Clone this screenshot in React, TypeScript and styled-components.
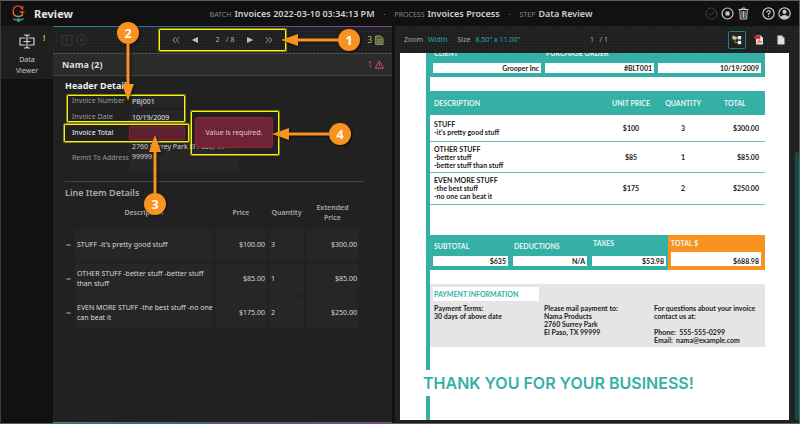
import React from "react";
import styled, { createGlobalStyle, css } from "styled-components";

const TEAL = "#35b0a7";
const ORANGE = "#f8931f";

const GlobalStyle = createGlobalStyle`
  *, *::before, *::after { box-sizing: border-box; }
  body {
    margin: 0;
    background: #111;
    color: #d6d6d6;
    font-family: "Noto Sans", sans-serif;
    font-size: 7px;
    line-height: 10px;
  }
  button, input, textarea { font: inherit; color: inherit; }
  h1, h2, h3, p, dl, dd { margin: 0; }
`;

const Shell = styled.div`
  position: relative;
  display: flex;
  flex-direction: column;
  min-height: 100vh;
  border: 1px solid #5d5e5e;
  border-left-color: #3c3c3c;
  background: #111;
`;

const IconButton = styled.button`
  display: inline-flex;
  align-items: center;
  justify-content: center;
  padding: 0;
  border: 0;
  background: none;
  color: inherit;
  cursor: pointer;
  svg { display: block; }
`;

/* ---------- top bar ---------- */

const TopBar = styled.header`
  display: grid;
  grid-template-columns: 1fr auto 1fr;
  align-items: center;
  height: 25px;
  padding: 0 8px 0 10px;
`;

const Brand = styled.div`
  display: flex;
  align-items: center;
  gap: 8px;
`;

const AppTitle = styled.h1`
  font-size: 11px;
  line-height: 16px;
  font-weight: 700;
  color: #e4e4e4;
`;

const Crumbs = styled.div`
  display: flex;
  align-items: baseline;
  gap: 9px;
  color: #999;
`;

const Crumb = styled.span`
  display: flex;
  align-items: baseline;
  gap: 3px;
  font-size: 7px;
  color: #858585;
  strong {
    font-size: 9px;
    line-height: 14px;
    font-weight: 600;
    color: #d0d0d0;
  }
`;

const TopActions = styled.div`
  display: flex;
  justify-content: flex-end;
  align-items: center;
  gap: 3px;
  color: #c9c9c9;
`;

const Spacer = styled.span`
  width: 6px;
`;

/* ---------- layout ---------- */

const Workspace = styled.div`
  flex: 1;
  display: grid;
  grid-template-columns: 52px minmax(0, 339fr) 3px minmax(0, 404fr);
`;

const Rail = styled.nav`
  background: #111;
`;

const RailTab = styled.button`
  display: grid;
  grid-template-columns: 1fr auto 1fr;
  align-items: start;
  align-content: start;
  justify-items: center;
  row-gap: 5px;
  width: 100%;
  height: 53px;
  padding: 8px 0 0;
  border: 0;
  background: #1f1f1f;
  color: #c8c8c8;
  line-height: 11px;
  svg { grid-column: 2; display: block; }
`;

const RailAlert = styled.span`
  color: #d9c92e;
  font-size: 8px;
  line-height: 8px;
  font-weight: 600;
`;

const RailLabel = styled.span`
  grid-column: 1 / -1;
  width: 30px;
`;

const DataPanel = styled.section`
  display: flex;
  flex-direction: column;
  background:
    linear-gradient(90deg, #1f8f92, #3c5f9c 45%, #8a3fa8) top / 100% 1px no-repeat,
    linear-gradient(90deg, #1f8f92, #3c5f9c 45%, #8a3fa8) bottom / 100% 1px no-repeat,
    #212121;
  padding: 1px 0;
`;

const toolbarTexture = css`
  background:
    repeating-linear-gradient(0deg, #ffffff06 0 1px, transparent 1px 3px),
    repeating-linear-gradient(90deg, #ffffff06 0 1px, transparent 1px 3px),
    #1e1e1e;
`;

const PanelToolbar = styled.div`
  ${toolbarTexture}
  display: grid;
  grid-template-columns: 1fr auto 1fr;
  align-items: center;
  height: 27px;
  padding: 0 8px;
  border-bottom: 1px solid #474747;
`;

const ToolGroup = styled.div`
  display: flex;
  gap: 3px;
  color: #3a3a3a;
`;

const Pager = styled.div`
  display: flex;
  align-items: center;
  gap: 9px;
  color: #a5a5a5;
`;

const PageField = styled.label`
  display: flex;
  align-items: center;
  width: 27px;
  color: #b0b0b0;
  white-space: nowrap;
  input {
    width: 17px;
    padding: 0;
    border: 0;
    outline: 0;
    background: none;
    text-align: center;
  }
`;

const Count = styled.span<{ $color: string }>`
  display: flex;
  align-items: center;
  justify-content: flex-end;
  gap: 3px;
  font-size: 8px;
  color: ${(p) => p.$color};
  svg { display: block; }
`;

const RecordBar = styled.div`
  display: flex;
  align-items: center;
  justify-content: space-between;
  height: 22px;
  padding: 0 8px 0 9px;
  border-bottom: 1px solid #444;
  background: repeating-conic-gradient(#262626 0 25%, #303030 0 50%) 0 0 / 4px 4px;
`;

const RecordTitle = styled.h2`
  font-size: 9px;
  line-height: 14px;
  font-weight: 700;
  color: #dcdcdc;
`;

const FormArea = styled.div`
  padding: 3px 28px 0 12px;
`;

const SectionTitle = styled.h3<{ $muted?: boolean }>`
  font-size: 9px;
  line-height: 14px;
  font-weight: ${(p) => (p.$muted ? 600 : 700)};
  color: ${(p) => (p.$muted ? "#adadad" : "#efefef")};
`;

const FieldRow = styled.label<{ $active?: boolean }>`
  display: grid;
  grid-template-columns: 57px minmax(0, 1fr);
  align-items: center;
  min-height: 16px;
  padding-left: 7px;
  color: ${(p) => (p.$active ? "#f2f2f2" : "#999")};
`;

const FieldInput = styled.input<{ $invalid?: boolean }>`
  width: 56px;
  height: 14px;
  padding: 0 2px;
  border: 1px solid ${(p) => (p.$invalid ? "#8e1f3a" : "transparent")};
  border-radius: 2px;
  outline: 0;
  background: ${(p) => (p.$invalid ? "#5c2030" : "#262626")};
  color: #e0e0e0;
  font-size: 7px;
`;

const FieldText = styled.textarea`
  display: block;
  width: 110px;
  height: 31px;
  margin: 1px 0;
  padding: 0 3px;
  border: 0;
  border-radius: 2px;
  outline: 0;
  resize: none;
  overflow: hidden;
  background: #262626;
  color: #d0d0d0;
  line-height: 10px;
`;

const Divider = styled.hr`
  height: 1px;
  margin: 7px 0 4px;
  border: 0;
  background: #444;
`;

const TableArea = styled.div`
  padding: 0 31px 0 9px;
`;

const ItemTable = styled.table`
  width: 100%;
  table-layout: fixed;
  border-collapse: separate;
  border-spacing: 2px;
`;

const ItemHead = styled.th<{ $w?: number }>`
  width: ${(p) => (p.$w ? `${p.$w}px` : "auto")};
  height: 25px;
  padding: 0 0 4px;
  font-weight: 600;
  color: #a8a8a8;
  white-space: pre-line;
`;

const ItemCell = styled.td<{ $end?: boolean }>`
  height: 32px;
  padding: ${(p) => (p.$end ? "0 2px 0 0" : "0 0 0 2px")};
  border-radius: 2px;
  background: #262626;
  color: #d8d8d8;
  text-align: ${(p) => (p.$end ? "right" : "left")};
`;

const HandleCell = styled.td`
  padding: 0 2px;
`;

const Handle = styled.span`
  display: block;
  width: 5px;
  height: 2px;
  border-radius: 1px;
  background: #6a6a6a;
`;

/* ---------- document viewer ---------- */

const Viewer = styled.section`
  display: flex;
  flex-direction: column;
  background: #212121;
`;

const ViewerBar = styled.div`
  ${toolbarTexture}
  display: grid;
  grid-template-columns: 1fr auto 1fr;
  align-items: center;
  height: 27px;
  padding: 1px 9px 0;
  color: #a8a8a8;
`;

const ViewOptions = styled.div`
  display: flex;
  gap: 10px;
`;

const Option = styled.span`
  display: flex;
  gap: 5px;
`;

const OptionValue = styled(IconButton)`
  color: #23a5b2;
  white-space: nowrap;
`;

const PageCount = styled.span`
  padding-left: 4px;
  white-space: pre;
`;

const ViewModes = styled.div`
  display: flex;
  align-items: center;
  justify-content: flex-end;
  gap: 4px;
`;

const ModeButton = styled(IconButton)<{ $active?: boolean }>`
  width: 18px;
  height: 18px;
  border: 1px solid ${(p) => (p.$active ? "#1a8288" : "transparent")};
  border-radius: 2px;
`;

const DocArea = styled.div`
  flex: 1;
  display: flex;
  padding: 0 0 3px 5px;
`;

const Paper = styled.article`
  flex: 1;
  min-width: 0;
  display: flex;
  flex-direction: column;
  padding: 0 24px 0 26px;
  background: #fff;
  color: #222;
  font-family: Lato, sans-serif;
  font-size: 7px;
  font-weight: 700;
  line-height: 8px;
`;

const ScrollTrack = styled.div`
  display: flex;
  flex-direction: column;
  width: 10px;
  padding: 99px 0 0 6px;
`;

const ScrollThumb = styled.div`
  flex: 1;
  border-radius: 2px;
  background: #154a4d;
`;

const Ruled = styled.div`
  border-left: 4px solid ${TEAL};
  padding-bottom: 23px;
`;

const Masthead = styled.div`
  display: grid;
  grid-template-columns: 108fr 109fr 103fr;
  gap: 4px;
  height: 24px;
  padding: 0 4px 4px 3px;
  background: ${TEAL};
`;

const MastField = styled.div`
  display: flex;
  flex-direction: column;
  justify-content: space-between;
`;

const ClippedLabel = styled.span`
  display: flex;
  align-items: flex-end;
  height: 4px;
  overflow: hidden;
  padding-left: 1px;
  color: #e6f6f4;
  white-space: nowrap;
`;

const ValueBox = styled.span<{ $tall?: boolean }>`
  display: flex;
  align-items: center;
  justify-content: flex-end;
  height: ${(p) => (p.$tall ? "14px" : "10px")};
  padding: ${(p) => (p.$tall ? "4px 2px 0" : "0 2px")};
  background: #fff;
  color: #222;
`;

const InvoiceTable = styled.table`
  width: 100%;
  margin-top: 14px;
  table-layout: fixed;
  border-collapse: collapse;
`;

const InvoiceHead = styled.th<{ $w: string; $start?: boolean }>`
  width: ${(p) => p.$w};
  height: 24px;
  padding: 0 4px;
  background: ${TEAL};
  color: #e6f6f4;
  font-weight: 700;
  text-align: ${(p) => (p.$start ? "left" : "center")};
`;

const InvoiceRow = styled.tr<{ $h: number }>`
  height: ${(p) => p.$h}px;
  border-bottom: 1px solid #62c3bb;
  &:last-child { border-bottom: 0; }
`;

const InvoiceCell = styled.td<{ $align?: string }>`
  padding: 0 ${(p) => (p.$align === "right" ? "6px" : "4px")};
  text-align: ${(p) => p.$align ?? "center"};
  white-space: pre-line;
`;

const Totals = styled.div`
  display: grid;
  grid-template-columns: 80fr 79fr 79fr 97fr;
  height: 35px;
  background: ${TEAL};
  color: #e6f6f4;
`;

const TotalField = styled.div<{ $accent?: boolean; $raised?: boolean }>`
  display: flex;
  flex-direction: column;
  justify-content: space-between;
  padding: ${(p) => (p.$raised ? "4px" : "7px")} ${(p) => (p.$accent ? "4px" : "2px")} 4px 3px;
  background: ${(p) => (p.$accent ? ORANGE : "none")};
`;

const TotalLabel = styled.span`
  padding-left: 1px;
`;

const Payment = styled.div`
  display: grid;
  grid-template-columns: 110fr 110fr 115fr;
  grid-template-rows: 14px auto;
  row-gap: 3px;
  height: 63px;
  margin-top: 14px;
  padding: 3px 0 0;
  background: #e5e5e5;
`;

const PaymentTitle = styled.h3`
  grid-column: 1 / 2;
  margin: 0 1px 0 3px;
  padding: 0 1px;
  background: #fff;
  color: ${TEAL};
  font-size: 7px;
  line-height: 14px;
  font-weight: 700;
`;

const PaymentText = styled.p`
  grid-row: 2;
  padding-left: 4px;
  white-space: pre;
`;

const Thanks = styled.p`
  margin-left: -3px;
  color: ${TEAL};
  font-family: Inter, sans-serif;
  font-size: 16px;
  line-height: 26px;
  font-weight: 600;
  white-space: nowrap;
`;

const RuleEnd = styled.div`
  flex: 1;
  width: 4px;
  background: ${TEAL};
`;

/* ---------- callouts laid over the page ---------- */

type Box = { x: number; y: number; w: number; h: number };

const Highlight = styled.div<{ $box: Box }>`
  position: absolute;
  left: ${(p) => p.$box.x}px;
  top: ${(p) => p.$box.y}px;
  width: ${(p) => p.$box.w}px;
  height: ${(p) => p.$box.h}px;
  border: 1px solid #f8f20c;
  border-radius: 1px;
  box-shadow: 0 0 0 1px #f6f00c77;
  pointer-events: none;
`;

const ErrorTip = styled.div`
  position: absolute;
  left: 194px;
  top: 116px;
  width: 78px;
  height: 31px;
  border: 1px solid #9a1e3c;
  border-radius: 3px;
  background: #6f2436;
  color: #dccbd0;
  text-align: center;
  line-height: 29px;
`;

type Direction = "row" | "row-reverse" | "column" | "column-reverse";

const CalloutBox = styled.div<{ $x: number; $y: number; $dir: Direction }>`
  position: absolute;
  left: ${(p) => p.$x}px;
  top: ${(p) => p.$y}px;
  display: flex;
  flex-direction: ${(p) => p.$dir};
  align-items: center;
  pointer-events: none;
  filter: drop-shadow(1px 1px 1px #0009);
  svg { display: block; }
`;

const Badge = styled.span`
  width: 22px;
  height: 22px;
  border-radius: 50%;
  background: ${ORANGE};
  color: #fff;
  font-family: "Open Sans", sans-serif;
  font-size: 13px;
  font-weight: 700;
  line-height: 22px;
  text-align: center;
`;

function Callout({ n, x, y, dir, length }: { n: number; x: number; y: number; dir: Direction; length: number }) {
  const vertical = dir.startsWith("column");
  const angle = { row: 0, "row-reverse": 180, column: 90, "column-reverse": 270 }[dir];
  const w = vertical ? 12 : length;
  const h = vertical ? length : 12;
  return (
    <CalloutBox $x={x} $y={y} $dir={dir}>
      <Badge>{n}</Badge>
      <svg width={w} height={h} viewBox={`${-w / 2} ${-h / 2} ${w} ${h}`} fill={ORANGE} aria-hidden="true">
        <g transform={`rotate(${angle})`}>
          <rect x={-length / 2 - 1} y={-1.5} width={length - 14} height={3} />
          <path d={`M${length / 2} 0L${length / 2 - 17} -6V6Z`} />
        </g>
      </svg>
    </CalloutBox>
  );
}

/* ---------- icons ---------- */

const stroke = { fill: "none", stroke: "currentColor", strokeLinecap: "round", strokeLinejoin: "round" } as const;

const Logo = () => (
  <svg width="15" height="18" viewBox="0 0 15 18" aria-label="Grooper">
    <defs>
      <linearGradient id="logoFill" x1="0" y1="0" x2="0" y2="1">
        <stop offset="0" stopColor="#c8402a" />
        <stop offset="1" stopColor="#e5822b" />
      </linearGradient>
    </defs>
    <path
      d="M11.2 4.6C10.6 2.2 9.2 1 7.2 1C4.2 1 2.2 3.1 2.2 6.3C2.2 9.5 4.2 11.5 7.2 11.5C8.9 11.5 10.2 11.1 11.3 10.2V7M8.6 6.9H13.4M11.6 1V4.8"
      fill="none"
      stroke="url(#logoFill)"
      strokeWidth="1.4"
    />
    <path d="M1.5 13.4H4L5 14.4L6.2 13.4H8.8L10 14.4L11 13.4H13.5L11.4 15.4L9.8 15.2L7.5 17.6L5.2 15.2L3.6 15.4Z" fill="#27a5a0" />
  </svg>
);

const CheckCircle = () => (
  <svg width="13" height="13" viewBox="0 0 13 13" {...stroke} color="#444">
    <circle cx="6.5" cy="6.5" r="5.5" />
    <path d="M4 6.7L5.8 8.4L9 4.8" />
  </svg>
);
const StopCircle = () => (
  <svg width="13" height="13" viewBox="0 0 13 13" {...stroke} strokeWidth="1.2">
    <circle cx="6.5" cy="6.5" r="5.5" />
    <rect x="4.5" y="4.5" width="4" height="4" fill="currentColor" stroke="none" />
  </svg>
);
const Trash = () => (
  <svg width="13" height="13" viewBox="0 0 13 13" {...stroke}>
    <path d="M1.8 2.5H11.2M4.6 2.3L5.2 1H7.8L8.4 2.3M2.8 3.2L3.3 12H9.7L10.2 3.2" />
    <path d="M5 4.5V10.4M6.5 4.5V10.4M8 4.5V10.4" strokeWidth="0.9" />
  </svg>
);
const Help = () => (
  <svg width="13" height="13" viewBox="0 0 13 13" {...stroke} strokeWidth="1.2">
    <circle cx="6.5" cy="6.5" r="5.6" />
    <path d="M4.9 5.1C4.9 3.2 8.2 3.2 8.2 5.1C8.2 6.3 6.5 6.3 6.5 7.5M6.5 9.2V9.5" />
  </svg>
);
const User = () => (
  <svg width="13" height="13" viewBox="0 0 13 13" {...stroke} strokeWidth="1.2">
    <circle cx="6.5" cy="6.5" r="5.6" />
    <circle cx="6.5" cy="4.9" r="2.1" fill="currentColor" stroke="none" />
    <path d="M2.8 10.2C3.6 7.4 9.4 7.4 10.2 10.2C8.4 12.2 4.6 12.2 2.8 10.2Z" fill="currentColor" stroke="none" />
  </svg>
);
const FieldCursor = () => (
  <svg width="16" height="15" viewBox="0 0 16 15" {...stroke} color="#d2d2d2" strokeWidth="1.2">
    <path d="M6 4H1V11H6M10 4H15V11H10M5.5 1H7L8 2L9 1H10.5M8 2V13M5.5 14H7L8 13L9 14H10.5M5 7.5H11" />
  </svg>
);
const SaveBox = () => (
  <svg width="12" height="12" viewBox="0 0 12 12" {...stroke}>
    <path d="M4 1.5H1V11H11V1.5H8M6 1V7M3.8 5L6 7.2L8.2 5" />
  </svg>
);
const CancelCircle = () => (
  <svg width="12" height="12" viewBox="0 0 12 12" {...stroke}>
    <circle cx="6" cy="6" r="5" />
    <path d="M4.2 4.2L7.8 7.8M7.8 4.2L4.2 7.8" />
  </svg>
);
const Chevrons = ({ flip }: { flip?: boolean }) => (
  <svg width="10" height="8" viewBox="0 0 10 8" {...stroke} strokeWidth="0.9">
    <path d={flip ? "M2 1.5L4.8 4L2 6.5M5.4 1.5L8.2 4L5.4 6.5" : "M8 1.5L5.2 4L8 6.5M4.6 1.5L1.8 4L4.6 6.5"} />
  </svg>
);
const Triangle = ({ flip }: { flip?: boolean }) => (
  <svg width="10" height="8" viewBox="0 0 10 8" fill="#bdbdbd">
    <path d={flip ? "M2 1L8.4 4L2 7Z" : "M8 1L1.6 4L8 7Z"} />
  </svg>
);
const Sheet = () => (
  <svg width="9" height="10" viewBox="0 0 9 10" {...stroke} color="#9a9a62" strokeWidth="1">
    <path d="M1 1H5.5L8 3.4V9.4H1Z" fill="#55603a" />
    <path d="M2.8 4.5H6.2M2.8 6H6.2M2.8 7.6H6.2" strokeWidth="0.7" />
  </svg>
);
const Warning = () => (
  <svg width="9" height="9" viewBox="0 0 9 9" {...stroke} color="#d84a66">
    <path d="M4.5 1L8.4 8.2H0.6Z" />
    <path d="M4.5 3.6V5.6M4.5 6.9V7" strokeWidth="0.9" />
  </svg>
);
const Tree = () => (
  <svg width="10" height="10" viewBox="0 0 10 10">
    <path d="M3 3V7.5H6M3 3H6" fill="none" stroke="#999" strokeWidth="0.8" />
    <path d="M0.4 0.8H2L2.6 1.5H4.6V4.4H0.4Z" fill="#e9c27a" />
    <rect x="5.8" y="1" width="3.4" height="3.4" fill="#eee" />
    <rect x="5.8" y="5.8" width="3.4" height="3.4" fill="#eee" />
  </svg>
);
const Pdf = () => (
  <svg width="10" height="10" viewBox="0 0 10 10">
    <path d="M2 0.5H6.8L9 2.8V9.5H2Z" fill="#e8e4e4" />
    <rect x="0.3" y="0.8" width="6" height="3" fill="#d3261f" />
    <path d="M3.2 8C5 6.8 5.3 5.4 5 4.6C4.8 6.4 6.4 7.2 8 6.9C6 6.6 4.4 7.2 3.2 8Z" fill="none" stroke="#d3261f" strokeWidth="0.6" />
  </svg>
);
const Blank = () => (
  <svg width="8" height="10" viewBox="0 0 8 10">
    <path d="M0.5 0.5H5L7.5 3V9.5H0.5Z" fill="#dedede" />
    <path d="M5 0.5V3H7.5" fill="#aaa" />
  </svg>
);

/* ---------- data ---------- */

const lineItems = [
  ["STUFF -it's pretty good stuff", "$100.00", "3", "$300.00"],
  ["OTHER STUFF -better stuff -better stuff than stuff", "$85.00", "1", "$85.00"],
  ["EVEN MORE STUFF -the best stuff -no one can beat it", "$175.00", "2", "$250.00"],
];

const invoiceLines = [
  { text: "STUFF\n-it's pretty good stuff", price: "$100", qty: "3", total: "$300.00", h: 26 },
  { text: "OTHER STUFF\n-better stuff\n-better stuff than stuff", price: "$85", qty: "1", total: "$85.00", h: 31 },
  { text: "EVEN MORE STUFF\n-the best stuff\n-no one can beat it", price: "$175", qty: "2", total: "$250.00", h: 32 },
  { text: "", price: "", qty: "", total: "", h: 31 },
];

export default function App() {
  return (
    <Shell>
      <GlobalStyle />
      <TopBar>
        <Brand>
          <Logo />
          <AppTitle>Review</AppTitle>
        </Brand>
        <Crumbs>
          <Crumb>BATCH <strong>Invoices 2022-03-10 03:34:13 PM</strong></Crumb>
          <span>·</span>
          <Crumb>PROCESS <strong>Invoices Process</strong></Crumb>
          <span>·</span>
          <Crumb>STEP <strong>Data Review</strong></Crumb>
        </Crumbs>
        <TopActions>
          <IconButton aria-label="Complete"><CheckCircle /></IconButton>
          <IconButton aria-label="Stop"><StopCircle /></IconButton>
          <IconButton aria-label="Delete"><Trash /></IconButton>
          <Spacer />
          <IconButton aria-label="Help"><Help /></IconButton>
          <IconButton aria-label="Account"><User /></IconButton>
        </TopActions>
      </TopBar>

      <Workspace>
        <Rail>
          <RailTab>
            <FieldCursor />
            <RailAlert>!</RailAlert>
            <RailLabel>Data Viewer</RailLabel>
          </RailTab>
        </Rail>

        <DataPanel>
          <PanelToolbar>
            <ToolGroup>
              <IconButton aria-label="Save"><SaveBox /></IconButton>
              <IconButton aria-label="Cancel"><CancelCircle /></IconButton>
            </ToolGroup>
            <Pager>
              <IconButton aria-label="First"><Chevrons /></IconButton>
              <IconButton aria-label="Previous"><Triangle /></IconButton>
              <PageField><input aria-label="Document" defaultValue="2" /> / 8</PageField>
              <IconButton aria-label="Next"><Triangle flip /></IconButton>
              <IconButton aria-label="Last"><Chevrons flip /></IconButton>
            </Pager>
            <Count $color="#b9bb78">3 <Sheet /></Count>
          </PanelToolbar>
          <RecordBar>
            <RecordTitle>Nama (2)</RecordTitle>
            <Count $color="#c9506a">1 <Warning /></Count>
          </RecordBar>

          <FormArea>
            <SectionTitle>Header Details</SectionTitle>
            <FieldRow>Invoice Number<FieldInput defaultValue="PBJ001" /></FieldRow>
            <FieldRow>Invoice Date<FieldInput defaultValue="10/19/2009" /></FieldRow>
            <FieldRow $active>Invoice Total<FieldInput $invalid aria-invalid="true" /></FieldRow>
            <FieldRow>Remit To Address<FieldText defaultValue={"2760 Surrey Park El Paso, TX\n99999"} /></FieldRow>
            <Divider />
            <SectionTitle $muted>Line Item Details</SectionTitle>
          </FormArea>
          <TableArea>
            <ItemTable>
              <thead>
                <tr>
                  <ItemHead $w={9} aria-label="Reorder" />
                  <ItemHead>Description</ItemHead>
                  <ItemHead $w={52}>Price</ItemHead>
                  <ItemHead $w={35}>Quantity</ItemHead>
                  <ItemHead $w={53}>{"Extended\nPrice"}</ItemHead>
                </tr>
              </thead>
              <tbody>
                {lineItems.map(([text, price, qty, total]) => (
                  <tr key={text}>
                    <HandleCell><Handle /></HandleCell>
                    <ItemCell>{text}</ItemCell>
                    <ItemCell $end>{price}</ItemCell>
                    <ItemCell>{qty}</ItemCell>
                    <ItemCell $end>{total}</ItemCell>
                  </tr>
                ))}
              </tbody>
            </ItemTable>
          </TableArea>
        </DataPanel>

        <div />

        <Viewer>
          <ViewerBar>
            <ViewOptions>
              <Option>Zoom <OptionValue>Width</OptionValue></Option>
              <Option>Size <OptionValue>8.50" x 11.00"</OptionValue></Option>
            </ViewOptions>
            <PageCount>1   / 1</PageCount>
            <ViewModes>
              <ModeButton $active aria-label="Tree view"><Tree /></ModeButton>
              <ModeButton aria-label="PDF"><Pdf /></ModeButton>
              <ModeButton aria-label="Text"><Blank /></ModeButton>
            </ViewModes>
          </ViewerBar>
          <DocArea>
            <Paper>
              <Ruled>
                <Masthead>
                  <MastField><ClippedLabel>CLIENT</ClippedLabel><ValueBox>Grooper Inc</ValueBox></MastField>
                  <MastField><ClippedLabel>PURCHASE ORDER</ClippedLabel><ValueBox>#BLT001</ValueBox></MastField>
                  <MastField><ClippedLabel /><ValueBox>10/19/2009</ValueBox></MastField>
                </Masthead>
                <InvoiceTable>
                  <thead>
                    <tr>
                      <InvoiceHead $w="51%" $start>DESCRIPTION</InvoiceHead>
                      <InvoiceHead $w="18%">UNIT PRICE</InvoiceHead>
                      <InvoiceHead $w="13%">QUANTITY</InvoiceHead>
                      <InvoiceHead $w="18%">TOTAL</InvoiceHead>
                    </tr>
                  </thead>
                  <tbody>
                    {invoiceLines.map((line, i) => (
                      <InvoiceRow key={i} $h={line.h}>
                        <InvoiceCell $align="left">{line.text}</InvoiceCell>
                        <InvoiceCell>{line.price}</InvoiceCell>
                        <InvoiceCell>{line.qty}</InvoiceCell>
                        <InvoiceCell $align="right">{line.total}</InvoiceCell>
                      </InvoiceRow>
                    ))}
                  </tbody>
                </InvoiceTable>
                <Totals>
                  <TotalField><TotalLabel>SUBTOTAL</TotalLabel><ValueBox>$635</ValueBox></TotalField>
                  <TotalField><TotalLabel>DEDUCTIONS</TotalLabel><ValueBox>N/A</ValueBox></TotalField>
                  <TotalField $raised><TotalLabel>TAXES</TotalLabel><ValueBox>$53.98</ValueBox></TotalField>
                  <TotalField $raised $accent><span>TOTAL $</span><ValueBox $tall>$688.98</ValueBox></TotalField>
                </Totals>
                <Payment>
                  <PaymentTitle>PAYMENT INFORMATION</PaymentTitle>
                  <PaymentText>{"Payment Terms:\n30 days of above date"}</PaymentText>
                  <PaymentText>{"Please mail payment to:\nNama Products\n2760 Surrey Park\nEl Paso, TX 99999"}</PaymentText>
                  <PaymentText>{"For questions about your invoice\ncontact us at:\n\nPhone:  555-555-0299\nEmail:  nama@example.com"}</PaymentText>
                </Payment>
              </Ruled>
              <Thanks>THANK YOU FOR YOUR BUSINESS!</Thanks>
              <RuleEnd />
            </Paper>
            <ScrollTrack><ScrollThumb /></ScrollTrack>
          </DocArea>
        </Viewer>
      </Workspace>

      <ErrorTip role="alert">Value is required.</ErrorTip>
      <Highlight $box={{ x: 158, y: 28, w: 127, h: 22 }} />
      <Highlight $box={{ x: 66, y: 94, w: 118, h: 27 }} />
      <Highlight $box={{ x: 63, y: 123, w: 125, h: 18 }} />
      <Highlight $box={{ x: 190, y: 110, w: 88, h: 44 }} />
      <Callout n={1} x={280} y={28} dir="row-reverse" length={57} />
      <Callout n={2} x={116} y={21} dir="column" length={57} />
      <Callout n={3} x={143} y={134} dir="column-reverse" length={58} />
      <Callout n={4} x={271} y={122} dir="row-reverse" length={57} />
    </Shell>
  );
}
